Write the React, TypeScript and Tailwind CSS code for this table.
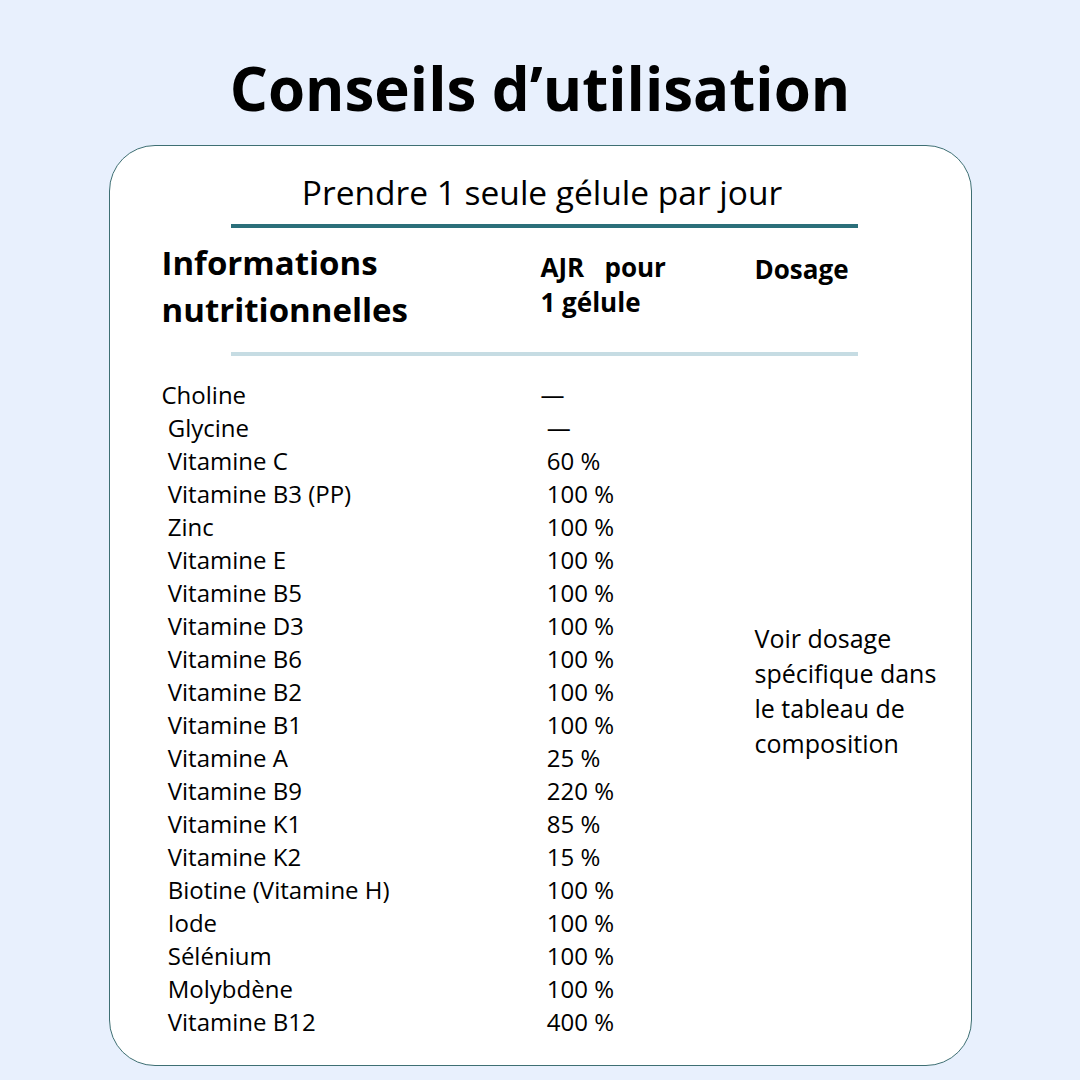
const rows: [string, string][] = [
  ["Choline", "—"],
  [" Glycine", " —"],
  [" Vitamine C", " 60 %"],
  [" Vitamine B3 (PP)", " 100 %"],
  [" Zinc", " 100 %"],
  [" Vitamine E", " 100 %"],
  [" Vitamine B5", " 100 %"],
  [" Vitamine D3", " 100 %"],
  [" Vitamine B6", " 100 %"],
  [" Vitamine B2", " 100 %"],
  [" Vitamine B1", " 100 %"],
  [" Vitamine A", " 25 %"],
  [" Vitamine B9", " 220 %"],
  [" Vitamine K1", " 85 %"],
  [" Vitamine K2", " 15 %"],
  [" Biotine (Vitamine H)", " 100 %"],
  [" Iode", " 100 %"],
  [" Sélénium", " 100 %"],
  [" Molybdène", " 100 %"],
  [" Vitamine B12", " 400 %"],
];

const App = () => {
  return (
    <div className="min-h-screen w-[1080px] h-[1080px] bg-[#e8f0fd] text-black font-['Open_Sans',sans-serif] pt-[52px]">
      <h1 className="text-center text-[60px] leading-[72px] font-bold">
        Conseils d’utilisation
      </h1>

      <div className="mx-auto mt-[21px] w-[863px] h-[921px] bg-white border border-[#3e6f73] rounded-[46px] pt-[24px]">
        {/* Dosage instruction */}
        <p className="text-center text-[33.5px] leading-[44px] font-normal pl-[4px]">
          Prendre 1 seule gélule par jour
        </p>
        <div className="ml-[121px] mt-[10px] w-[627px] h-[4px] bg-[#2b6f7a]" />

        {/* Header */}
        <div className="flex pl-[52px] mt-[11px]">
          <div className="w-[379px] text-[33px] leading-[47px] font-bold">
            Informations
            <br />
            nutritionnelles
          </div>
          <div className="w-[214px] pt-[11px] text-[26px] leading-[35px] font-bold whitespace-pre">
            {"AJR   pour\n1 gélule"}
          </div>
          <div className="pt-[13px] text-[26px] leading-[35px] font-bold">Dosage</div>
        </div>
        <div className="ml-[121px] mt-[19px] w-[627px] h-[4px] bg-[#c6dce3]" />

        {/* Rows */}
        <div className="flex pl-[52px] mt-[22px] text-[24px] leading-[33px]">
          <div className="w-[379px]">
            {rows.map(([name]) => (
              <div key={name} className="whitespace-pre">
                {name}
              </div>
            ))}
          </div>
          <div className="w-[214px]">
            {rows.map(([name, value]) => (
              <div key={name} className="whitespace-pre">
                {value}
              </div>
            ))}
          </div>
          <div className="pt-[243px] text-[25px] leading-[35px]">
            Voir dosage
            <br />
            spécifique dans
            <br />
            le tableau de
            <br />
            composition
          </div>
        </div>
      </div>
    </div>
  );
};

export default App;
